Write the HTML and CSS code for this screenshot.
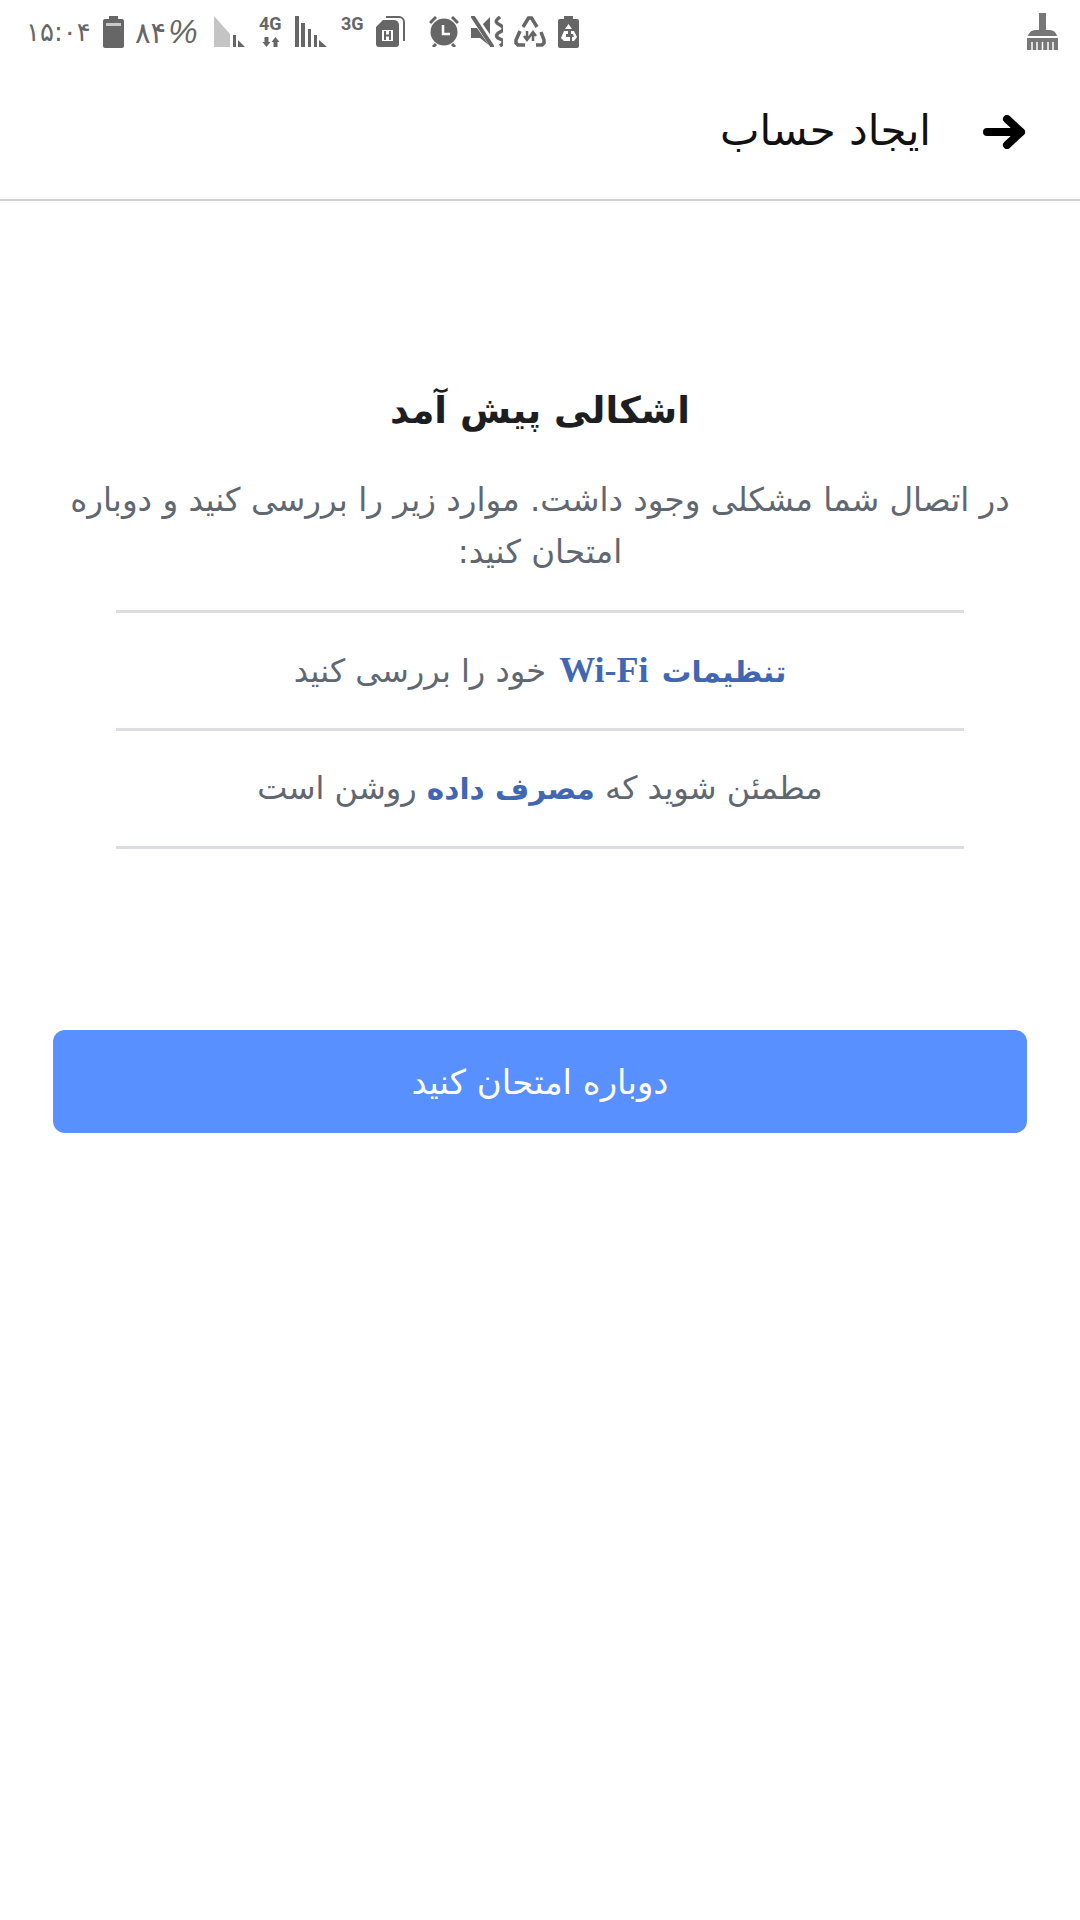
FILE: index.html
```html
<!DOCTYPE html>
<html lang="fa" dir="rtl">
<head>
  <meta charset="UTF-8" />
  <meta name="viewport" content="width=device-width, initial-scale=1.0"/>
  <title>ایجاد حساب</title>
  <link rel="stylesheet" href="styles.css">
</head>
<body>
  <div class="status-bar" dir="ltr">
    <div class="status-left">
      <span class="clock">۱۵:۰۴</span>
      <svg class="ic battery" viewBox="0 0 21 32"><path d="M6 0h9v3h4a2 2 0 0 1 2 2v25a2 2 0 0 1-2 2H2a2 2 0 0 1-2-2V5a2 2 0 0 1 2-2h4z" fill="#666"/><rect x="3" y="7" width="15" height="3" fill="#c8c8c8"/></svg>
      <span class="percent">۸۴<span class="pct">%</span></span>
      <svg class="ic signal-a" viewBox="0 0 31 31"><path d="M0 0 16 18V31H0z" fill="#c4c4c4"/><rect x="19" y="19" width="3" height="12" fill="#666"/><path d="M24 24 31 31H24z" fill="#666"/></svg>
      <div class="net">
        <span>4G</span>
        <svg viewBox="0 0 18 10"><path d="M2.500 0h4v5h2L4.500 10 .500 5h2zM13.500 0l4 5h-2v5h-4V5h-2z" fill="#666"/></svg>
      </div>
      <svg class="ic signal-b" viewBox="0 0 32 31"><path d="M0 0h4v31H0zM6 7h4v24H6zM13 13h3v18h-3zM19 19h3v12h-3zM24 24l8 7h-8z" fill="#666"/></svg>
      <span class="net-3g">3G</span>
      <svg class="ic sim" viewBox="0 0 29 31"><path d="M10 0h13a6 6 0 0 1 6 6v19h-2V6a4 4 0 0 0-4-4H10z" fill="#666"/><path d="M7 4h11a5 5 0 0 1 5 5v19a3 3 0 0 1-3 3H3a3 3 0 0 1-3-3V11z" fill="#666"/><path d="M6 14h11v11H6z" fill="#fff"/><path d="M9 15v9M14 15v9M9 19.500h5" stroke="#666" stroke-width="2"/></svg>
      <svg class="ic alarm" viewBox="0 0 30 31"><circle cx="15" cy="16" r="13.500" fill="#666"/><path d="M1 7 7 1M29 7 23 1M7 28 4 31M23 28 26 31" stroke="#666" stroke-width="3"/><path d="M14 9v9h7" fill="none" stroke="#fff" stroke-width="2.500"/></svg>
      <svg class="ic mute" viewBox="0 0 32 31"><path d="M0 12h8L19 1v29L9 22H0z" fill="#666"/><path d="M2 0 22 29" stroke="#fff" stroke-width="7"/><path d="M2 1 21 30" stroke="#666" stroke-width="4" stroke-linecap="round"/><path d="M29 1c-5 4-5 5 0 8s4 5 0 7-5 5 0 7 4 4 0 7" fill="none" stroke="#666" stroke-width="3.500"/></svg>
      <svg class="ic recycle" viewBox="0 0 32 31"><path d="M9 11 14.500 2h3L23 11M6 15 2 24v3l2 2h7M22 29h6l2-2v-3l-3-8" fill="none" stroke="#666" stroke-width="3.500"/><path d="M13 15v9M10 20l3 4 3-4M19 25v-9M16 20l3-4 3 4" fill="none" stroke="#666" stroke-width="2.500"/></svg>
      <svg class="ic battery-save" viewBox="0 0 21 32"><path d="M6 0h9v3h4a2 2 0 0 1 2 2v25a2 2 0 0 1-2 2H2a2 2 0 0 1-2-2V5a2 2 0 0 1 2-2h4z" fill="#666"/><path d="M10.500 8 14 13H7zM6 15h4v3H8v3h4v4H6l-3-3zM13 15h3l3 6-3 4h-2v-4h2l-1-3h-2z" fill="#fff"/></svg>
    </div>
    <svg class="ic broom" viewBox="0 0 31 37"><path d="M12 0h7v17h-7z" fill="#777"/><path d="M1 23c1-4 4-6 8-6h13c4 0 7 2 8 6z" fill="#777"/><path d="M0 25h31v12H0z" fill="#777"/><path d="M5 29v8M10 29v8M15.500 29v8M21 29v8M26 29v8" stroke="#fff" stroke-width="1.500"/></svg>
  </div>

  <div class="app-header">
    <svg class="back" viewBox="0 0 44 34"><path d="M4 17h34M24 4l14 13-14 13" fill="none" stroke="#000" stroke-width="8" stroke-linecap="round" stroke-linejoin="round"/></svg>
    <div class="app-title">ایجاد حساب</div>
  </div>

  <div class="content">
    <h1>اشکالی پیش آمد</h1>
    <p class="intro">در اتصال شما مشکلی وجود داشت. موارد زیر را بررسی کنید و دوباره امتحان کنید:</p>
    <div class="checks">
      <div class="check-item"><a class="link">تنظیمات <span class="latin">Wi-Fi</span></a> خود را بررسی کنید</div>
      <div class="check-item">مطمئن شوید که <a class="link">مصرف داده</a> روشن است</div>
    </div>
    <button class="retry">دوباره امتحان کنید</button>
  </div>
</body>
</html>
```

FILE: styles.css
```css
body {
  margin: 0;
  width: 1080px;
  height: 1920px;
  background: #fff;
  font-family: "DejaVu Sans", "Noto Sans", sans-serif;
  overflow: hidden;
}

.status-bar {
  height: 62px;
  display: flex;
  justify-content: space-between;
  align-items: flex-start;
  padding: 16px 22px 0 26px;
  box-sizing: border-box;
  color: #666;
}

.status-left {
  display: flex;
  align-items: flex-start;
}

.ic {
  display: block;
  flex: none;
}

.clock {
  width: 65px;
  font-size: 26px;
  line-height: 32px;
}

.battery {
  width: 21px;
  height: 32px;
  margin-left: 12px;
}

.percent {
  width: 65px;
  margin-left: 11px;
  font-size: 29px;
  line-height: 32px;
  white-space: nowrap;
}

.pct {
  margin-left: 2px;
  font-family: "Liberation Sans", sans-serif;
  font-size: 33px;
  font-style: italic;
}

.signal-a {
  width: 31px;
  height: 31px;
  margin-left: 14px;
}

.net {
  width: 24px;
  margin-left: 14px;
  font-family: "Roboto", sans-serif;
  font-size: 18px;
  font-weight: bold;
  line-height: 16px;
}

.net svg {
  display: block;
  width: 18px;
  height: 10px;
  margin: 5px 0 0 3px;
}

.signal-b {
  width: 32px;
  height: 31px;
  margin-left: 12px;
}

.net-3g {
  width: 24px;
  margin-left: 14px;
  font-family: "Roboto", sans-serif;
  font-size: 18px;
  font-weight: bold;
  line-height: 16px;
}

.sim {
  width: 29px;
  height: 31px;
  margin-left: 11px;
}

.alarm {
  width: 30px;
  height: 31px;
  margin-left: 24px;
}

.mute {
  width: 32px;
  height: 31px;
  margin-left: 12px;
}

.recycle {
  width: 32px;
  height: 31px;
  margin-left: 11px;
}

.battery-save {
  width: 21px;
  height: 32px;
  margin-left: 12px;
}

.broom {
  width: 31px;
  height: 37px;
  margin-top: -3px;
}

.app-header {
  height: 137px;
  display: flex;
  align-items: center;
  padding: 0 53px;
  border-bottom: 2px solid #d0d0d0;
}

.back {
  width: 44px;
  height: 34px;
  margin-top: 2px;
}

.app-title {
  margin-right: 52px;
  font-size: 42px;
  color: #111;
}

.content {
  padding: 0 53px;
  text-align: center;
}

h1 {
  margin: 180px 0 0;
  font-size: 37px;
  line-height: 60px;
  color: #1c1e21;
}

.intro {
  margin: 33px 0 0;
  font-size: 32.500px;
  line-height: 52px;
  color: #606770;
}

.checks {
  margin: 32px 63px 0;
  border-top: 3px solid #dadde1;
}

.check-item {
  height: 115px;
  line-height: 115px;
  border-bottom: 3px solid #dadde1;
  font-size: 32px;
  color: #606770;
}

.link {
  color: #4267b2;
  font-size: 29.500px;
  font-weight: bold;
}

.latin {
  margin: 0 3px;
  font-family: "Liberation Serif", serif;
  font-size: 36px;
}

.retry {
  display: block;
  width: 100%;
  height: 103px;
  margin-top: 181px;
  border: none;
  border-radius: 12px;
  background: #5890ff;
  color: #fff;
  font-family: inherit;
  font-size: 34px;
}
```
